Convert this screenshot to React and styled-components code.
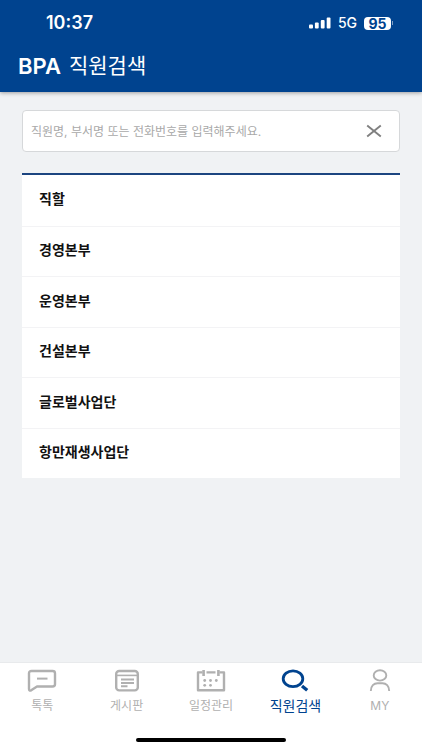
import React, { useState } from 'react'
import styled, { createGlobalStyle } from 'styled-components';

const GlobalStyle = createGlobalStyle`
    * {
        box-sizing: border-box;
    }
    body {
        margin: 0;
        background: #f0f2f4;
        font-family: Inter, "Noto Sans CJK KR", sans-serif;
    }
    button, input {
        font-family: inherit;
    }
`

const Page = styled.div`
    min-height: 100vh;
    display: flex;
    flex-direction: column;
`

const Header = styled.header`
    background: #00438f;
    color: white;
    padding-bottom: 6px;
    box-shadow: 0 1px 4px rgba(0, 0, 0, 0.35);
`

const StatusBar = styled.div`
    height: 46px;
    display: flex;
    align-items: center;
    justify-content: space-between;
    padding: 0 29px 0 46px;
`

const Time = styled.span`
    font-size: 18px;
    line-height: 20px;
    font-weight: 600;
`

const StatusIcons = styled.div`
    display: flex;
    align-items: center;
    gap: 7px;
`

const Network = styled.span`
    font-size: 14px;
    line-height: 16px;
    font-weight: 500;
`

const Battery = styled.div`
    display: flex;
    align-items: center;
    gap: 1px;

    &::after {
        content: "";
        width: 1px;
        height: 4px;
        background: #7f9fc6;
    }
`

const BatteryLevel = styled.span`
    width: 27px;
    height: 13px;
    border-radius: 4px;
    background: white;
    color: #00438f;
    font-size: 14px;
    line-height: 13px;
    font-weight: 700;
    text-align: center;
`

const Title = styled.h1`
    display: flex;
    gap: 8px;
    margin: 0;
    padding: 0 18px;
    font-size: 21px;
    line-height: 40px;
    font-weight: 400;
`

const Brand = styled.span`
    font-size: 22px;
    font-weight: 600;
`

const Content = styled.main`
    flex: 1;
    padding: 18px 22px;
`

const SearchForm = styled.form`
    display: flex;
    align-items: center;
    height: 42px;
    margin-bottom: 21px;
    padding-right: 17px;
    background: white;
    border: 1px solid #d6d8da;
    border-radius: 4px;
`

const SearchInput = styled.input`
    flex: 1;
    min-width: 0;
    height: 40px;
    padding: 0 8px;
    border: 0;
    outline: 0;
    background: transparent;
    font-size: 12px;
    color: #222;

    &::placeholder {
        color: #a9a9a9;
        opacity: 1;
    }
`

const ClearButton = styled.button`
    display: flex;
    padding: 0;
    border: 0;
    background: transparent;
    color: #808080;
    cursor: pointer;
`

const DeptList = styled.ul`
    display: grid;
    grid-auto-rows: 1fr;
    min-height: 305px;
    margin: 0;
    padding: 0;
    list-style: none;
    background: white;
    border-top: 2px solid #1c4580;
`

const DeptItem = styled.li`
    display: flex;

    & + & {
        border-top: 1px solid #f3f3f5;
    }
`

const DeptButton = styled.button`
    flex: 1;
    padding: 0 17px 2px;
    border: 0;
    background: transparent;
    color: #111;
    font-size: 14px;
    line-height: 20px;
    font-weight: 700;
    text-align: left;
    cursor: pointer;
`

const TabBar = styled.nav`
    display: flex;
    background: white;
    border-top: 1px solid #e8eaec;
`

const Tab = styled.a`
    flex: 1;
    display: flex;
    flex-direction: column;
    align-items: center;
    gap: 4px;
    padding-top: 6px;
    color: ${props => props.$active ? '#00438f' : '#b0b0b0'};
    font-size: ${props => props.$active ? '14px' : '12px'};
    line-height: 18px;
    text-decoration: none;
    white-space: nowrap;
`

const HomeArea = styled.div`
    display: flex;
    justify-content: center;
    padding: 23px 0 8px;
    background: white;
`

const HomeBar = styled.div`
    width: 150px;
    height: 4px;
    border-radius: 2px;
    background: black;
`

const departments = ['직할', '경영본부', '운영본부', '건설본부', '글로벌사업단', '항만재생사업단'];

function SignalIcon() {
    return (
        <svg width="22" height="12" viewBox="0 0 22 12" fill="currentColor" aria-hidden="true">
            <rect x="0" y="7.4" width="4" height="4.1" rx="1" />
            <rect x="5.9" y="5.4" width="3.8" height="6.1" rx="1" />
            <rect x="11.8" y="3" width="3.8" height="8.5" rx="1" />
            <rect x="17.7" y="0.5" width="3.8" height="11" rx="1" />
        </svg>
    )
}

function CloseIcon() {
    return (
        <svg width="16" height="14" viewBox="0 0 16 14" fill="none" stroke="currentColor" strokeWidth="1.9" aria-hidden="true">
            <path d="M1.2 1.5L14.8 12.5M14.8 1.5L1.2 12.5" />
        </svg>
    )
}

function TabIcon({ children }) {
    return (
        <svg width="30" height="24" viewBox="0 0 30 24" fill="none" stroke="currentColor" strokeWidth="2" strokeLinejoin="round" aria-hidden="true">
            {children}
        </svg>
    )
}

function TalkIcon() {
    return (
        <TabIcon>
            <path d="M4.5 2H25.5Q28 2 28 4.2V15.3Q28 17.5 25.5 17.5H10L4.2 21.3Q2 22.3 2 20V4.2Q2 2 4.5 2Z" strokeWidth="2.4" />
            <path d="M10 9.6H20.5" />
        </TabIcon>
    )
}

function BoardIcon() {
    return (
        <TabIcon>
            <rect x="4.2" y="2" width="21.6" height="19.4" rx="3" strokeWidth="2.4" />
            <path d="M4.5 6.4H25.5" strokeWidth="1.6" />
            <path d="M9 10.6H22M9 13.9H22M9 17.2H15.5" strokeWidth="2" />
        </TabIcon>
    )
}

function CalendarIcon() {
    return (
        <TabIcon>
            <path d="M6.5 3.4H2V21.2H28V3.4H23.5M10.5 3.4H19.5" strokeWidth="2.4" />
            <path d="M7.6 1V7M22.4 1V7" strokeWidth="2.6" />
            <g fill="currentColor" stroke="none">
                <circle cx="8.7" cy="11.5" r="1.4" />
                <circle cx="14.5" cy="11.5" r="1.4" />
                <circle cx="20.3" cy="11.5" r="1.4" />
                <circle cx="8.7" cy="16.3" r="1.4" />
                <circle cx="14.5" cy="16.3" r="1.4" />
            </g>
        </TabIcon>
    )
}

function SearchIcon() {
    return (
        <TabIcon>
            <ellipse cx="13" cy="9.8" rx="9.8" ry="7.9" strokeWidth="2.8" />
            <path d="M22 17L27.2 21.2" strokeWidth="3.4" />
        </TabIcon>
    )
}

function UserIcon() {
    return (
        <TabIcon>
            <ellipse cx="15" cy="6.4" rx="6.3" ry="5.2" strokeWidth="1.9" />
            <path d="M5.8 22C5.8 17 9 14.2 12.5 14.2H17.5C21 14.2 24.2 17 24.2 22" strokeWidth="1.9" />
        </TabIcon>
    )
}

const tabs = [
    { id: 'talk', label: '톡톡', Icon: TalkIcon },
    { id: 'board', label: '게시판', Icon: BoardIcon },
    { id: 'schedule', label: '일정관리', Icon: CalendarIcon },
    { id: 'search', label: '직원검색', Icon: SearchIcon },
    { id: 'my', label: 'MY', Icon: UserIcon },
];

function App() {
    const [keyword, setKeyword] = useState('');

    return (
        <Page>
            <GlobalStyle />
            <Header>
                <StatusBar>
                    <Time>10:37</Time>
                    <StatusIcons>
                        <SignalIcon />
                        <Network>5G</Network>
                        <Battery>
                            <BatteryLevel>95</BatteryLevel>
                        </Battery>
                    </StatusIcons>
                </StatusBar>
                <Title><Brand>BPA</Brand> 직원검색</Title>
            </Header>
            <Content>
                <SearchForm onSubmit={e => e.preventDefault()}>
                    <SearchInput
                        type="text"
                        aria-label="직원 검색어"
                        placeholder="직원명, 부서명 또는 전화번호를 입력해주세요."
                        value={keyword}
                        onChange={e => setKeyword(e.target.value)}
                    />
                    <ClearButton type="button" aria-label="지우기" onClick={() => setKeyword('')}>
                        <CloseIcon />
                    </ClearButton>
                </SearchForm>
                <DeptList>
                    {departments.map(name => (
                        <DeptItem key={name}>
                            <DeptButton type="button">{name}</DeptButton>
                        </DeptItem>
                    ))}
                </DeptList>
            </Content>
            <TabBar>
                {tabs.map(({ id, label, Icon }) => (
                    <Tab key={id} href={`#${id}`} $active={id === 'search'}>
                        <Icon />
                        {label}
                    </Tab>
                ))}
            </TabBar>
            <HomeArea>
                <HomeBar />
            </HomeArea>
        </Page>
    )
}

export default App;
